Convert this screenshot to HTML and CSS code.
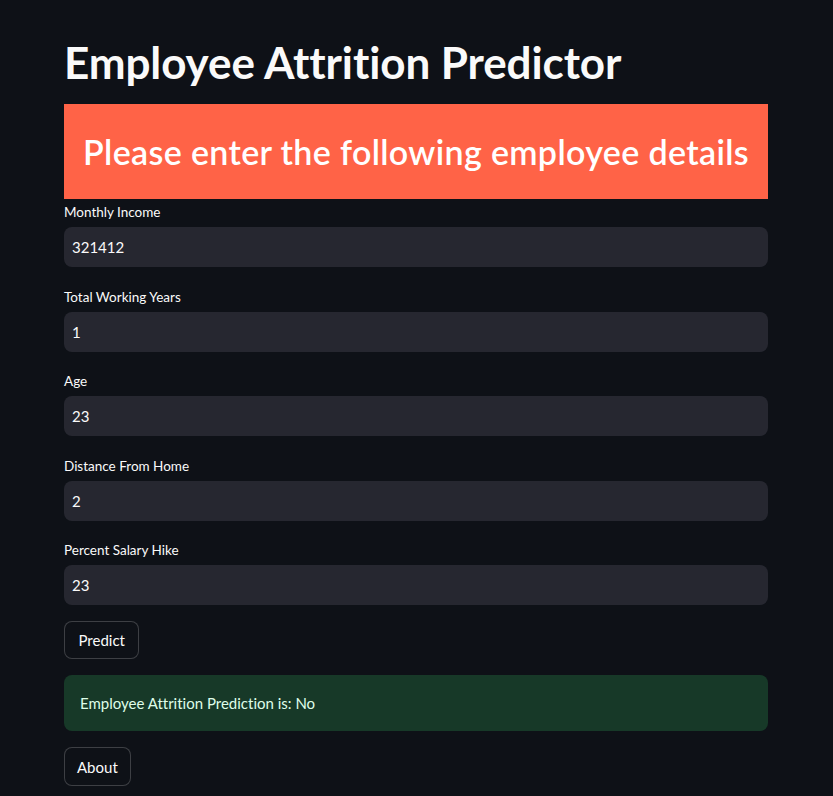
FILE: index.html
```html
<!DOCTYPE html>
<html>
<head>
<meta charset="utf-8">
<link rel="stylesheet" href="styles.css">
</head>
<body>
<main class="main">
  <h1 class="title">Employee Attrition Predictor</h1>
  <div class="banner"><h2>Please enter the following employee details</h2></div>
  <div class="fields">
    <div class="field"><label>Monthly Income</label><div class="input">321412</div></div>
    <div class="field"><label>Total Working Years</label><div class="input">1</div></div>
    <div class="field"><label>Age</label><div class="input">23</div></div>
    <div class="field"><label>Distance From Home</label><div class="input">2</div></div>
    <div class="field"><label>Percent Salary Hike</label><div class="input">23</div></div>
  </div>
  <button class="btn btn-predict">Predict</button>
  <div class="success">Employee Attrition Prediction is: No</div>
  <button class="btn btn-about">About</button>
</main>
</body>
</html>
```
FILE: styles.css
```css
html, body {
  margin: 0;
  padding: 0;
  background: #0e1117;
  color: #fafafa;
  font-family: "Lato", "Liberation Sans", sans-serif;
  font-variant-ligatures: none;
  height: 100%;
  overflow: hidden;
}
.main {
  width: 704px;
  margin-left: 64px;
  display: flex;
  flex-direction: column;
  align-items: flex-start;
}
.title {
  margin: 34px 0 0 0;
  font-size: 44px;
  font-weight: 700;
  line-height: 56px;
  height: 56px;
  letter-spacing: -0.1px;
}
.banner {
  align-self: stretch;
  margin-top: 14px;
  height: 95px;
  background: #ff6347;
  display: flex;
  align-items: center;
  justify-content: center;
}
.banner h2 {
  margin: 0;
  font-size: 34px;
  font-weight: 600;
  color: #ffffff;
  letter-spacing: 0.35px;
}
.fields {
  align-self: stretch;
  display: flex;
  flex-direction: column;
  gap: 19.5px;
  margin-top: 3px;
}
.field {
  display: flex;
  flex-direction: column;
}
.field label {
  font-size: 13.5px;
  line-height: 20px;
  height: 25px;
  color: #fafafa;
}
.input {
  height: 40px;
  background: #262730;
  border-radius: 8px;
  padding: 0 8px;
  display: flex;
  align-items: center;
  font-size: 15px;
}
.btn {
  font-family: inherit;
  font-variant-ligatures: none;
  font-size: 15px;
  color: #fafafa;
  background: #0e1117;
  border: 1px solid rgba(250, 250, 250, 0.2);
  border-radius: 8px;
  padding: 0 12px;
  height: 38px;
}
.btn-predict {
  margin-top: 16px;
  padding: 0 13.5px;
}
.success {
  align-self: stretch;
  margin-top: 16px;
  height: 56px;
  box-sizing: border-box;
  padding: 0 16px;
  background: #173928;
  color: #dffde9;
  border-radius: 8px;
  display: flex;
  align-items: center;
  font-size: 15px;
}
.btn-about {
  margin-top: 16px;
  height: 39px;
}
```
